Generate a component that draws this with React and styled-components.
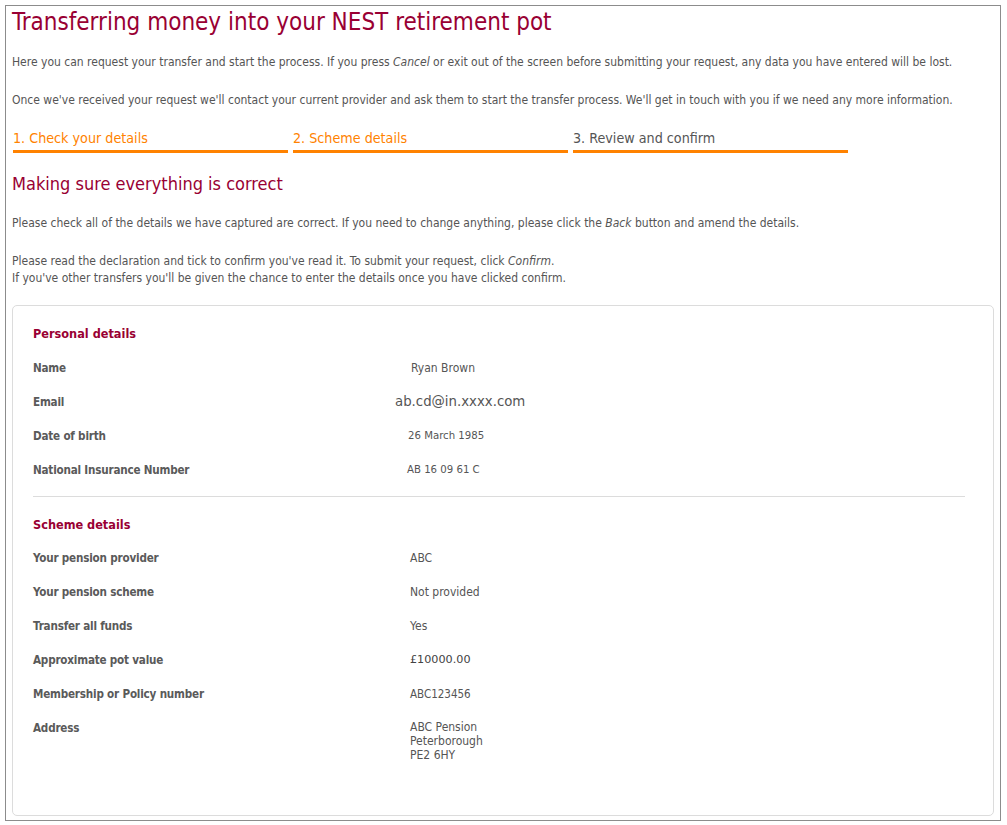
import React from "react";
import styled, { createGlobalStyle } from "styled-components";

const Global = createGlobalStyle`
  html, body { margin: 0; padding: 0; background: #fff; }
  body { font-family: "DejaVu Sans Condensed", "DejaVu Sans", Verdana, sans-serif; color: #555; }
`;

const Frame = styled.div`
  margin: 5px;
  width: 996px;
  height: 816px;
  box-sizing: border-box;
  border: 1px solid #8c8c8c;
  padding: 0 6px;
`;

const Title = styled.h1`
  margin: 0;
  font-size: 24px;
  line-height: 32px;
  font-weight: normal;
  color: #990033;
`;

const Para = styled.p`
  margin: ${(p) => p.$mt || 0}px 0 0;
  font-size: 12px;
  line-height: 17px;
  color: #555;
`;

const Steps = styled.div`
  display: flex;
  gap: 5px;
  margin: 21px 0 0 1px;
`;

const Step = styled.div`
  width: 275px;
  font-size: 14.2px;
  line-height: 17px;
  padding-bottom: 3px;
  border-bottom: 3px solid #ff8200;
  color: ${(p) => (p.$active ? "#ff8200" : "#555")};
`;

const Heading = styled.h2`
  margin: 20px 0 0;
  font-size: 18px;
  line-height: 22px;
  font-weight: normal;
  color: #990033;
`;

const Card = styled.div`
  margin-top: 18px;
  border: 1px solid #dcdcdc;
  border-radius: 5px;
  padding: 20px 28px 53px 20px;
`;

const SectionTitle = styled.h3`
  margin: 0;
  height: ${(p) => p.$h || 34}px;
  font-size: 12.6px;
  line-height: 16px;
  font-weight: bold;
  color: #990033;
`;

const Row = styled.div`
  display: grid;
  grid-template-columns: 377px 1fr;
  min-height: 34px;
  font-size: 12px;
  line-height: 16px;
`;

const Label = styled.div`
  font-size: 11.6px;
  letter-spacing: -0.2px;
  font-weight: bold;
  color: #5a5a5a;
`;

const Value = styled.div`
  color: #555;
  font-size: ${(p) => p.$fs || 12}px;
  margin-left: ${(p) => p.$shift || 0}px;
  line-height: ${(p) => p.$lh || 16}px;
`;

const EmailValue = styled.div`
  margin-left: -15px;
  font-family: "DejaVu Sans", Verdana, sans-serif;
  font-size: 13.3px;
  color: #555;
`;

const MoneyValue = styled.div`
  font-family: "DejaVu Sans", Verdana, sans-serif;
  font-size: 11.2px;
  color: #444;
`;

const Divider = styled.hr`
  margin: 0 0 20px;
  border: none;
  border-top: 1px solid #dcdcdc;
`;

const personal = [
  { l: "Name", v: "Ryan Brown", shift: 1 },
  { l: "Email", kind: "email" },
  { l: "Date of birth", v: "26 March 1985", fs: 11.3, shift: -2 },
  { l: "National Insurance Number", v: "AB 16 09 61 C", fs: 11.3, shift: -3 },
];

const scheme = [
  { l: "Your pension provider", v: "ABC" },
  { l: "Your pension scheme", v: "Not provided" },
  { l: "Transfer all funds", v: "Yes" },
  { l: "Approximate pot value", v: "£10000.00", kind: "money" },
  { l: "Membership or Policy number", v: "ABC123456", fs: 11.5 },
];

function renderValue(r) {
  if (r.kind === "email") return <EmailValue>ab.cd@in.xxxx.com</EmailValue>;
  if (r.kind === "money") return <MoneyValue>{r.v}</MoneyValue>;
  return (
    <Value $fs={r.fs} $shift={r.shift}>
      {r.v}
    </Value>
  );
}

export default function App() {
  return (
    <>
      <Global />
      <Frame>
        <Title>Transferring money into your NEST retirement pot</Title>
        <Para $mt={16}>
          Here you can request your transfer and start the process. If you press <i>Cancel</i> or exit out of the screen before submitting your request, any data you have entered will be lost.
        </Para>
        <Para $mt={21}>
          Once we've received your request we'll contact your current provider and ask them to start the transfer process. We'll get in touch with you if we need any more information.
        </Para>
        <Steps>
          <Step $active>1. Check your details</Step>
          <Step $active>2. Scheme details</Step>
          <Step>3. Review and confirm</Step>
        </Steps>
        <Heading>Making sure everything is correct</Heading>
        <Para $mt={20}>
          Please check all of the details we have captured are correct. If you need to change anything, please click the <i>Back</i> button and amend the details.
        </Para>
        <Para $mt={21}>
          Please read the declaration and tick to confirm you've read it. To submit your request, click <i>Confirm</i>.
          <br />
          If you've other transfers you'll be given the chance to enter the details once you have clicked confirm.
        </Para>
        <Card>
          <SectionTitle>Personal details</SectionTitle>
          {personal.map((r) => (
            <Row key={r.l}>
              <Label>{r.l}</Label>
              {renderValue(r)}
            </Row>
          ))}
          <Divider />
          <SectionTitle $h={33}>Scheme details</SectionTitle>
          {scheme.map((r) => (
            <Row key={r.l}>
              <Label>{r.l}</Label>
              {renderValue(r)}
            </Row>
          ))}
          <Row>
            <Label>Address</Label>
            <Value $lh={14}>
              ABC Pension
              <br />
              Peterborough
              <br />
              PE2 6HY
            </Value>
          </Row>
        </Card>
      </Frame>
    </>
  );
}
